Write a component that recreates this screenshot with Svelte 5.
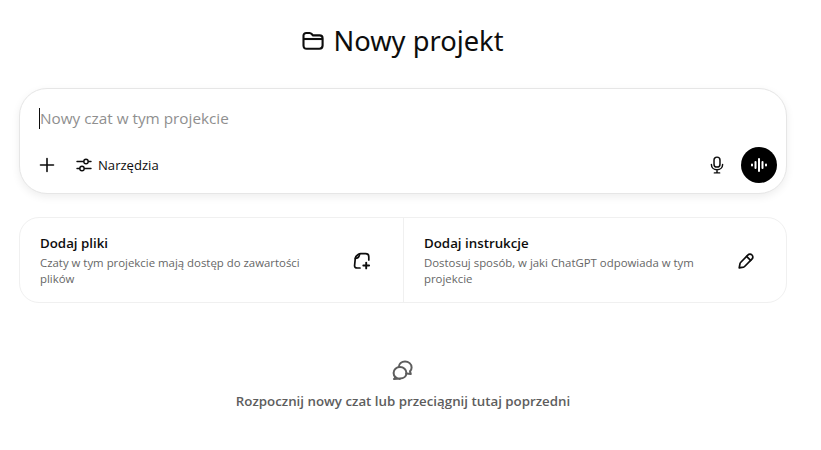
<script lang="ts">
	const cards = [
		{
			title: "Dodaj pliki",
			text: "Czaty w tym projekcie mają dostęp do zawartości plików",
			icon: "files",
		},
		{
			title: "Dodaj instrukcje",
			text: "Dostosuj sposób, w jaki ChatGPT odpowiada w tym projekcie",
			icon: "pencil",
		},
	];
</script>

<main class="page">
	<h1 class="title">
		<svg class="folder" viewBox="0 0 22 20" width="22" height="20" fill="none" stroke="currentColor" stroke-width="2.1" stroke-linejoin="round">
			<path d="M1.5 6V4.6C1.5 3 2.6 2 4.2 2H7.6C8.6 2 9.3 2.5 9.9 3.2L10.8 4.4H17.6C19.4 4.4 20.6 5.6 20.6 7.4V14.6C20.6 16.6 19.4 17.8 17.4 17.8H4.6C2.7 17.8 1.5 16.6 1.5 14.6Z" />
			<path d="M1.5 8H20.6" />
		</svg>
		<span>Nowy projekt</span>
	</h1>

	<section class="composer">
		<div class="prompt"><span class="caret"></span>Nowy czat w tym projekcie</div>
		<div class="toolbar">
			<button class="plus" aria-label="Dodaj">
				<svg viewBox="0 0 16 16" width="16" height="16" fill="none" stroke="currentColor" stroke-width="1.6" stroke-linecap="round">
					<path d="M8 1.5V14.5M1.5 8H14.5" />
				</svg>
			</button>
			<button class="tools">
				<svg viewBox="0 0 16 16" width="16" height="16" fill="none" stroke="currentColor" stroke-width="1.4" stroke-linecap="round">
					<path d="M1 4.5H7.6M12.4 4.5H15M1 11.5H3.6M8.4 11.5H15" />
					<circle cx="10" cy="4.5" r="2.2" />
					<circle cx="6" cy="11.5" r="2.2" />
				</svg>
				Narzędzia
			</button>
			<span class="spacer"></span>
			<button class="mic" aria-label="Dyktuj">
				<svg viewBox="0 0 16 20" width="14" height="18" fill="none" stroke="currentColor" stroke-width="1.7" stroke-linecap="round">
					<rect x="4.6" y="1" width="6.8" height="11.4" rx="3.4" />
					<path d="M1.6 9.4C1.6 13 4.4 15.4 8 15.4S14.4 13 14.4 9.4M8 15.4V19M5 19H11" />
				</svg>
			</button>
			<button class="voice" aria-label="Tryb głosowy">
				<svg viewBox="0 0 20 20" width="20" height="20" fill="none" stroke="#fff" stroke-width="2" stroke-linecap="round">
					<path d="M3 9.5V10.5M6.5 7V13M10 4V16M13.5 7V13M17 9.5V10.5" />
				</svg>
			</button>
		</div>
	</section>

	<section class="cards">
		{#each cards as card}
			<div class="card">
				<div class="card-text">
					<div class="card-title">{card.title}</div>
					<div class="card-desc">{card.text}</div>
				</div>
				<div class="card-icon" class:files={card.icon === "files"}>
					{#if card.icon === "files"}
						<svg viewBox="0 0 18 18" width="18" height="18" fill="none" stroke="currentColor" stroke-width="1.7" stroke-linecap="round" stroke-linejoin="round">
							<path d="M7 16H4.2C2.4 16 1.4 15 1.6 13.4L2.3 6.2C2.5 4.8 3 4 4.2 3.2L5.6 2.2C6.2 1.8 6.8 1.6 7.6 1.6H12.6C14.6 1.6 15.8 2.8 15.8 4.8V8" />
							<path d="M2.4 6.4C4 6.4 5.6 5.6 6.2 3.8L6.6 2" />
							<path d="M13.2 10.6V16.4M10.3 13.5H16.1" stroke-width="1.9" />
						</svg>
					{:else}
						<svg viewBox="0 0 18 18" width="18" height="18" fill="none" stroke="currentColor" stroke-width="1.7" stroke-linejoin="round" stroke-linecap="round">
							<path d="M2.2 15.8L3 11.6C3.1 11.2 3.3 10.8 3.6 10.5L10.8 3.1C12 1.9 13.8 1.8 15 3C16.2 4.2 16.1 6 14.9 7.2L7.6 14.5C7.3 14.8 6.9 15 6.5 15.1Z" />
							<path d="M9.6 4.4L13.6 8.4" />
						</svg>
					{/if}
				</div>
			</div>
		{/each}
	</section>

	<section class="empty">
		<svg viewBox="0 0 22 20" width="22" height="20" fill="none" stroke="currentColor" stroke-width="2" stroke-linejoin="round" stroke-linecap="round">
			<path d="M8 19C4.4 19 1.6 16.4 1.6 13C1.6 9.6 4.4 7 8 7C11.6 7 14.4 9.6 14.4 13C14.4 16.4 11.6 18.6 8 18.6L2 19C2.8 18.4 3.2 17.6 3.4 16.8" />
			<path d="M6.8 7C7 3.8 9.6 1.4 13 1.4C16.6 1.4 19.6 4 19.6 7.4C19.6 9 19 10.2 18 11.2L18.8 14L14.2 13.6" />
		</svg>
		<p>Rozpocznij nowy czat lub przeciągnij tutaj poprzedni</p>
	</section>
</main>

<style>
	:global(body) {
		margin: 0;
		background: #fff;
	}

	.page {
		width: 768px;
		margin-left: 19px;
		font-family: "Open Sans", "Noto Sans", sans-serif;
		color: #0d0d0d;
	}

	.title {
		display: flex;
		justify-content: center;
		align-items: center;
		gap: 9px;
		height: 40px;
		margin: 0;
		padding-top: 21px;
		font-family: "Noto Sans", sans-serif;
		font-size: 27.3px;
		font-weight: 400;
		line-height: 40px;
	}

	.composer {
		box-sizing: border-box;
		height: 106px;
		margin-top: 27px;
		padding: 17px 9px 10px 19px;
		background: #fff;
		border: 1px solid #e6e6e6;
		border-radius: 28px;
		box-shadow: 0 3px 8px rgba(0, 0, 0, 0.07);
	}

	.prompt {
		height: 24px;
		font-size: 15.3px;
		line-height: 24px;
		color: #8f8f8f;
	}

	.caret {
		display: inline-block;
		width: 1px;
		height: 21px;
		vertical-align: -5px;
		background: #0d0d0d;
	}

	.toolbar {
		display: flex;
		align-items: center;
		height: 36px;
		margin-top: 17px;
	}

	button {
		display: flex;
		align-items: center;
		padding: 0;
		border: 0;
		background: none;
		color: inherit;
		font: inherit;
	}

	.tools {
		gap: 6px;
		margin-left: 21px;
		font-size: 13.1px;
	}

	.spacer {
		flex: 1;
	}

	.mic {
		margin-right: 17px;
	}

	.voice {
		justify-content: center;
		width: 36px;
		height: 36px;
		border-radius: 50%;
		background: #000;
	}

	.cards {
		display: grid;
		grid-template-columns: 383px 1fr;
		height: 86px;
		margin-top: 23px;
		border: 1px solid #f0f0f0;
		border-radius: 20px;
		box-sizing: border-box;
	}

	.card {
		display: flex;
		align-items: center;
		justify-content: space-between;
		padding: 0 16px 0 20px;
	}

	.card + .card {
		border-left: 1px solid #f0f0f0;
	}

	.card-text {
		width: 290px;
	}

	.card-title {
		font-size: 13.3px;
		font-weight: 600;
		line-height: 20px;
	}

	.card-desc {
		margin-top: 2px;
		font-size: 11.4px;
		line-height: 16px;
		color: #666;
	}

	.card-icon {
		display: flex;
		margin-right: 15px;
		margin-top: 1px;
	}

	.card-icon.files {
		margin-right: 16px;
	}

	.empty {
		display: flex;
		flex-direction: column;
		align-items: center;
		margin-top: 57px;
		color: #5d5d5d;
	}

	.empty p {
		margin: 11px 0 0;
		font-size: 13.3px;
		font-weight: 600;
		line-height: 20px;
	}
</style>
